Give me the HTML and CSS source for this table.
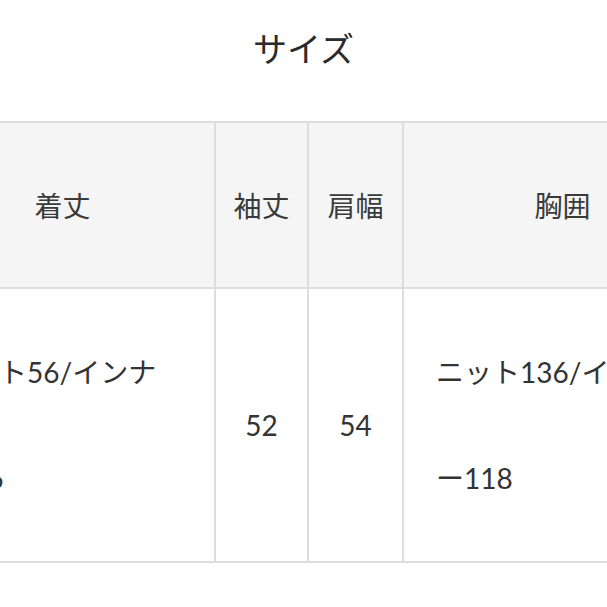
FILE: index.html
```html
<!DOCTYPE html>
<html lang="ja">
<head>
<meta charset="utf-8">
<title>サイズ</title>
<link rel="stylesheet" href="styles.css">
</head>
<body>
<div class="page">
  <h1 class="title">サイズ</h1>
  <div class="size-table">
    <div class="cell head">着丈</div>
    <div class="cell head">袖丈</div>
    <div class="cell head">肩幅</div>
    <div class="cell head">胸囲</div>
    <div class="cell body multi">ニット56/インナ<br>ー56</div>
    <div class="cell body">52</div>
    <div class="cell body">54</div>
    <div class="cell body multi">ニット136/インナ<br>ー118</div>
  </div>
</div>
</body>
</html>
```

FILE: styles.css
```css
html, body {
  margin: 0;
  padding: 0;
  background: #ffffff;
  overflow: hidden;
}

body {
  width: 607px;
  height: 607px;
  font-family: Lato, "Noto Sans CJK JP", sans-serif;
  color: #333333;
}

.page {
  padding-top: 28px;
}

.title {
  margin: 0;
  height: 40px;
  line-height: 40px;
  font-size: 34px;
  font-weight: 400;
  text-align: center;
  color: #2a2a2a;
  font-family: "Noto Sans CJK JP", sans-serif;
}

.size-table {
  margin-top: 53px;
  margin-left: -89px;
  width: 812px;
  display: grid;
  grid-template-columns: 305px 93px 95px 319px;
  grid-template-rows: 166px 274px;
  border-top: 2px solid #dddddd;
}

.cell {
  box-sizing: border-box;
  border-right: 2px solid #dddddd;
  border-bottom: 2px solid #dddddd;
  display: flex;
  align-items: center;
  justify-content: center;
  font-size: 28px;
  white-space: nowrap;
}

.head {
  background: #f5f5f5;
  color: #3a3a3a;
  font-family: "Noto Sans CJK JP", sans-serif;
}

.body {
  background: #ffffff;
}

.multi {
  justify-content: flex-start;
  padding-left: 32px;
  line-height: 106px;
}
```
